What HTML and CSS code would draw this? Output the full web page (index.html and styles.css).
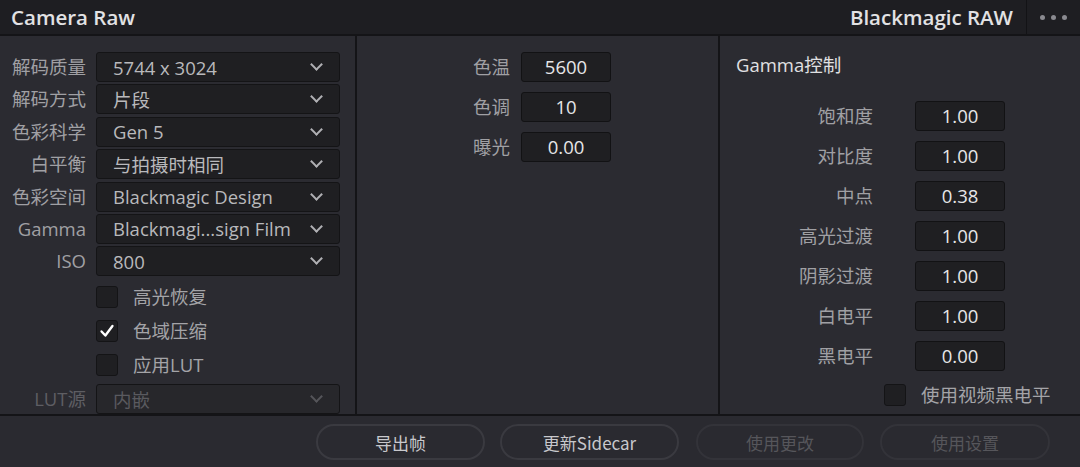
FILE: index.html
```html
<!DOCTYPE html>
<html lang="zh">
<head>
<meta charset="utf-8">
<link rel="stylesheet" href="styles.css">
</head>
<body>
<div class="app">
  <header class="topbar">
    <div class="title">Camera Raw</div>
    <div class="topright">
      <div class="brand">Blackmagic RAW</div>
      <div class="more"><span></span><span></span><span></span></div>
    </div>
  </header>
  <main class="body">
    <section class="panel left">
      <div class="form">
        <label class="lbl">解码质量</label><div class="select"><span>5744 x 3024</span><i class="chev"></i></div>
        <label class="lbl">解码方式</label><div class="select"><span>片段</span><i class="chev"></i></div>
        <label class="lbl">色彩科学</label><div class="select"><span>Gen 5</span><i class="chev"></i></div>
        <label class="lbl">白平衡</label><div class="select"><span>与拍摄时相同</span><i class="chev"></i></div>
        <label class="lbl">色彩空间</label><div class="select"><span>Blackmagic Design</span><i class="chev"></i></div>
        <label class="lbl">Gamma</label><div class="select"><span>Blackmagi...sign Film</span><i class="chev"></i></div>
        <label class="lbl">ISO</label><div class="select"><span>800</span><i class="chev"></i></div>
      </div>
      <div class="checks">
        <div class="check"><span class="box"></span><span class="ctext">高光恢复</span></div>
        <div class="check"><span class="box on"><svg viewBox="0 0 22 22" width="22" height="22"><path d="M5 11.5 L9.2 16 L17 5.5" fill="none" stroke="#fff" stroke-width="2.6" stroke-linecap="round" stroke-linejoin="round"/></svg></span><span class="ctext">色域压缩</span></div>
        <div class="check"><span class="box"></span><span class="ctext">应用LUT</span></div>
      </div>
      <div class="form lutrow">
        <label class="lbl dim">LUT源</label><div class="select disabled"><span>内嵌</span><i class="chev"></i></div>
      </div>
    </section>
    <section class="panel mid">
      <div class="vals">
        <label class="lbl">色温</label><div class="num">5600</div>
        <label class="lbl">色调</label><div class="num">10</div>
        <label class="lbl">曝光</label><div class="num">0.00</div>
      </div>
    </section>
    <section class="panel right">
      <div class="heading">Gamma控制</div>
      <div class="vals gamma">
        <label class="lbl">饱和度</label><div class="num">1.00</div>
        <label class="lbl">对比度</label><div class="num">1.00</div>
        <label class="lbl">中点</label><div class="num">0.38</div>
        <label class="lbl">高光过渡</label><div class="num">1.00</div>
        <label class="lbl">阴影过渡</label><div class="num">1.00</div>
        <label class="lbl">白电平</label><div class="num">1.00</div>
        <label class="lbl">黑电平</label><div class="num">0.00</div>
      </div>
      <div class="check vcheck"><span class="box"></span><span class="ctext">使用视频黑电平</span></div>
    </section>
  </main>
  <footer class="footer">
    <button class="btn b1">导出帧</button>
    <button class="btn b2">更新Sidecar</button>
    <button class="btn b3 off">使用更改</button>
    <button class="btn b4 off">使用设置</button>
  </footer>
</div>
</body>
</html>
```
FILE: styles.css
```css
* { box-sizing: border-box; }
html, body { margin: 0; padding: 0; }
body {
  background: #2a2a30;
  font-family: "Open Sans", "Noto Sans CJK SC", sans-serif;
  color: #9a9a9e;
  font-size: 18.5px;
}
.app { width: 1080px; height: 467px; display: flex; flex-direction: column; }

.topbar {
  height: 36px;
  background: #1e1e22;
  border-bottom: 2px solid #141417;
  display: flex;
  align-items: center;
  justify-content: space-between;
  padding-left: 11px;
}
.title, .brand {
  font-size: 20.5px;
  font-weight: 600;
  color: #e2e2e4;
  line-height: 1;
}
.topright { display: flex; align-items: center; height: 100%; }
.brand { padding-right: 13px; }
.more {
  height: 100%;
  width: 54px;
  border-left: 1px solid #131316;
  display: flex;
  align-items: center;
  justify-content: center;
  gap: 6px;
}
.more span { width: 5px; height: 5px; border-radius: 50%; background: #8a8a90; }

.body {
  height: 380px;
  display: flex;
  border-bottom: 2px solid #141417;
}
.panel { background: #2b2b31; height: 100%; }
.left { width: 357px; border-right: 2px solid #141417; padding: 16px 0 0 0; }
.mid { width: 363px; border-right: 2px solid #141417; padding-top: 16px; }
.right { flex: 1; padding-top: 16px; position: relative; }

.form {
  display: grid;
  grid-template-columns: 86px 244px;
  column-gap: 10px;
  row-gap: 2.4px;
}
.lbl { text-align: right; line-height: 30px; height: 30px; white-space: nowrap; color: #a0a0a4; }
.lbl.dim { color: #5e5e63; }
.select {
  height: 30px;
  background: #1f1f22;
  border: 1px solid #141416;
  border-radius: 3px;
  display: flex;
  align-items: center;
  justify-content: space-between;
  padding: 0 16px 0 16px;
  color: #b9b9bc;
  white-space: nowrap;
}
.select.disabled { background: #27272b; color: #5a5a5f; }
.chev {
  width: 9px; height: 9px;
  border-right: 2px solid #b0b0b4;
  border-bottom: 2px solid #b0b0b4;
  transform: rotate(45deg);
  margin-top: -5px;
  margin-right: 2px;
}
.select.disabled .chev { border-color: #55555a; }

.checks { padding: 10px 0 0 96px; display: flex; flex-direction: column; gap: 12px; }
.check { display: flex; align-items: center; height: 22px; }
.box {
  width: 22px; height: 22px;
  background: #1f1f22;
  border: 1px solid #141416;
  border-radius: 3px;
  display: flex; align-items: center; justify-content: center;
}
.box svg { display: block; }
.ctext { margin-left: 15px; color: #a4a4a8; line-height: 22px; }
.lutrow { margin-top: 8px; }

.vals {
  display: grid;
  grid-template-columns: 153px 90px;
  column-gap: 11px;
  row-gap: 10px;
}
.num {
  height: 30px;
  background: #1f1f22;
  border: 1px solid #121214;
  border-radius: 3px;
  text-align: center;
  line-height: 28px;
  color: #e6e6e8;
}
.heading { padding-left: 16px; color: #e0e0e2; line-height: 26px; height: 26px; margin-bottom: 23px; }
.gamma { column-gap: 42px; }
.vcheck { margin-top: 13px; padding-left: 164px; }
.vcheck .ctext { margin-left: 15px; }

.footer {
  flex: 1;
  display: flex;
  align-items: center;
  padding-left: 316px;
}
.btn {
  height: 36px;
  border-radius: 18px;
  background: #2a2a30;
  border: 2px solid #3a3a40;
  color: #c8c8cc;
  font-family: "Noto Sans CJK SC", "Open Sans", sans-serif;
  font-size: 17px;
  padding: 0;
  margin-top: 1px;
}
.btn.off { color: #56565b; border-color: #333339; }
.b1 { width: 169px; }
.b2 { width: 179px; margin-left: 15px; }
.b3 { width: 168px; margin-left: 17px; }
.b4 { width: 170px; margin-left: 16px; }
```
